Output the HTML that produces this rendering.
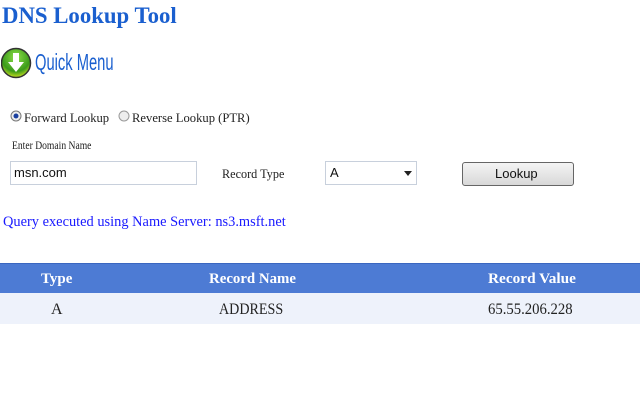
<!DOCTYPE html>
<html><head><meta charset="utf-8"><style>
body{margin:0;width:640px;height:400px;background:#fff;position:relative;overflow:hidden;font-family:"Liberation Serif",serif;}
.a{position:absolute;white-space:nowrap;transform-origin:0 0;}
</style></head><body>
<div class="a" style="left:2px;top:3px;font-size:23px;font-weight:bold;color:#1a5fcf;transform:scaleX(0.99)">DNS Lookup Tool</div>
<svg class="a" style="left:1px;top:47px" width="32" height="34" viewBox="0 0 32 34">
<defs><radialGradient id="g" cx="50%" cy="30%" r="70%"><stop offset="0" stop-color="#8fe04a"/><stop offset="0.7" stop-color="#3a9a1a"/><stop offset="1" stop-color="#c8e020"/></radialGradient></defs>
<circle cx="15" cy="16" r="14.5" fill="url(#g)" stroke="#333" stroke-width="1.5"/>
<path d="M12 6h6v9h5l-8 10-8-10h5z" fill="#fff"/>
</svg>
<div class="a" style="left:35px;top:49px;font-family:'Liberation Sans',sans-serif;font-size:23px;color:#1a5fcf;transform:scaleX(0.64)">Quick Menu</div>
<svg class="a" style="left:10px;top:110px" width="12" height="12"><circle cx="6" cy="6" r="5" fill="#eee" stroke="#777"/><circle cx="6" cy="6" r="2.5" fill="#1a3f9f"/></svg>
<div class="a" style="left:24px;top:110px;font-size:13px;color:#222;transform:scaleX(0.97)">Forward Lookup</div>
<svg class="a" style="left:118px;top:110px" width="12" height="12"><circle cx="6" cy="6" r="5" fill="#eee" stroke="#999"/></svg>
<div class="a" style="left:132px;top:110px;font-size:13px;color:#222;transform:scaleX(0.97)">Reverse Lookup (PTR)</div>
<div class="a" style="left:12px;top:138px;font-size:12px;color:#222;transform:scaleX(0.8)">Enter Domain Name</div>
<div class="a" style="left:10px;top:161px;width:187px;height:24px;border:1px solid #c8d0dc;box-sizing:border-box;"></div>
<div class="a" style="left:14px;top:165px;font-family:'Liberation Sans',sans-serif;font-size:13px;color:#111">msn.com</div>
<div class="a" style="left:222px;top:166px;font-size:13px;color:#222;transform:scaleX(0.94)">Record Type</div>
<div class="a" style="left:325px;top:161px;width:92px;height:24px;border:1px solid #c8d0dc;box-sizing:border-box;"></div>
<div class="a" style="left:330px;top:165px;font-family:'Liberation Sans',sans-serif;font-size:13px;color:#111">A</div>
<svg class="a" style="left:404px;top:171px" width="8" height="5"><path d="M0 0h8L4 5z" fill="#222"/></svg>
<div class="a" style="left:462px;top:162px;width:112px;height:24px;border:1px solid #666;border-radius:3px;box-sizing:border-box;background:linear-gradient(#f4f4f4,#d8d8d8);"></div>
<div class="a" style="left:495px;top:166px;font-family:'Liberation Sans',sans-serif;font-size:13px;color:#111">Lookup</div>
<div class="a" style="left:3px;top:214px;font-size:15px;color:#1a1aff;transform:scaleX(0.96)">Query executed using Name Server: ns3.msft.net</div>
<div class="a" style="left:0;top:263px;width:640px;height:30px;background:#4d7bd4;border-top:1px solid #3a66c0;box-sizing:border-box;"></div>
<div class="a" style="left:0;top:293px;width:640px;height:31px;background:#eef2fb;"></div>
<div class="a" style="left:41px;top:271px;font-size:15px;font-weight:bold;color:#fff">Type</div>
<div class="a" style="left:209px;top:271px;font-size:15px;font-weight:bold;color:#fff;transform:scaleX(0.99)">Record Name</div>
<div class="a" style="left:488px;top:271px;font-size:15px;font-weight:bold;color:#fff;transform:scaleX(1.02)">Record Value</div>
<div class="a" style="left:51px;top:301px;font-size:16px;color:#222">A</div>
<div class="a" style="left:219px;top:301px;font-size:16px;color:#222;transform:scaleX(0.88)">ADDRESS</div>
<div class="a" style="left:488px;top:301px;font-size:16px;color:#222;transform:scaleX(0.92)">65.55.206.228</div>
</body></html>
